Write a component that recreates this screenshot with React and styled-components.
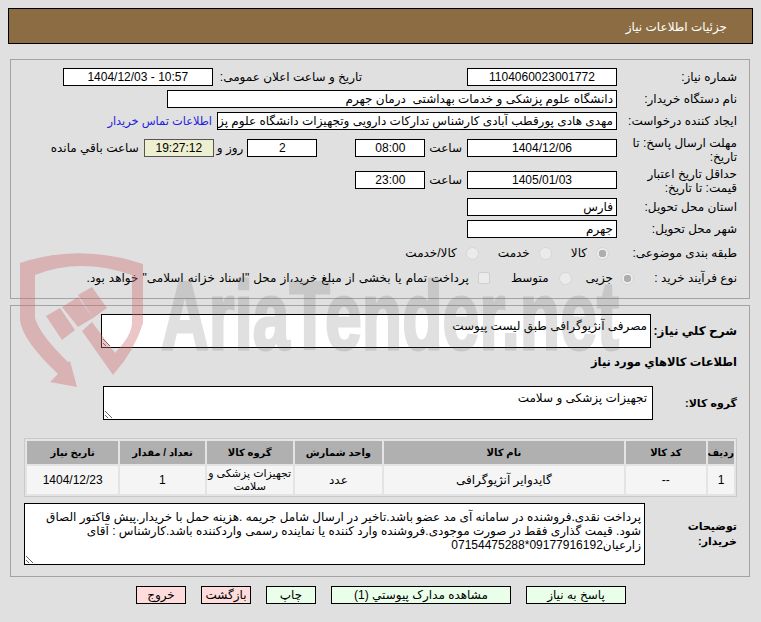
import React from 'react'
import styled, { createGlobalStyle } from 'styled-components'

const GlobalStyle = createGlobalStyle`
  html, body {
    margin: 0;
    padding: 0;
    background: #e0e0e0;
  }
  body {
    font-family: "Liberation Sans", "DejaVu Sans", sans-serif;
    font-size: 12px;
    color: #000;
  }
`

const Page = styled.div`
  position: relative;
  width: 761px;
  height: 622px;
  padding: 8px 8px 0;
  box-sizing: border-box;
  overflow: hidden;
  direction: rtl;
`

// sits over the page, the form shows through it
const Watermark = styled.svg`
  position: absolute;
  left: 0;
  top: 0;
  z-index: 5;
  pointer-events: none;
`

const MarkText = styled.text`
  font-family: "Liberation Sans", sans-serif;
  font-weight: 700;
  fill: #5a5a5a;
  stroke: #5a5a5a;
  stroke-width: 3px;
  opacity: 0.18;
  direction: ltr;
`

const Header = styled.div`
  position: relative;
  height: 36px;
  background: #8c6d43;
  border: 1px solid #000;
  box-sizing: border-box;
  color: #fff;
  display: flex;
  align-items: center;
  padding: 2px 25px 0 0;
  font-size: 12px;
`

const Panel = styled.div`
  position: relative;
  margin: ${p => p.$top}px 3px 0 2px;
  height: ${p => p.$height}px;
  border: 1px solid #a3a3a3;
  box-sizing: border-box;
  padding: 8px 12px 0 12px;
`

const Row = styled.div`
  display: flex;
  align-items: center;
  height: ${p => p.$h || 18}px;
  margin-top: ${p => p.$mt || 0}px;
`

const Label = styled.div`
  width: 112px;
  flex: none;
  margin-left: 8px;
  padding-top: ${p => p.$pt || 0}px;
  line-height: 14px;
`

const BoldLabel = styled.div`
  width: ${p => p.$w}px;
  flex: none;
  font-weight: 700;
  font-size: ${p => p.$size || 11}px;
  line-height: 15px;
`

const Field = styled.div`
  width: ${p => p.$w}px;
  height: 18px;
  flex: none;
  box-sizing: border-box;
  margin-right: ${p => p.$mr || 0}px;
  background: ${p => p.$bg || '#fff'};
  border: 1px solid ${p => (p.$bg ? '#555' : '#000')};
  line-height: 16px;
  padding: 0 3px;
  text-align: ${p => p.$align || 'right'};
  white-space: pre;
  overflow: hidden;
`

const Text = styled.span`
  margin-right: ${p => p.$mr || 0}px;
  white-space: nowrap;
  word-spacing: ${p => p.$ws || 0}px;
  color: inherit;
`

const ContactLink = styled.a`
  margin-right: 5px;
  white-space: nowrap;
  font-size: 11.4px;
  color: #2222dd;
`

const Radio = styled.input.attrs({ type: 'radio', disabled: true })`
  appearance: none;
  flex: none;
  width: 13px;
  height: 13px;
  margin: 1px ${p => p.$mr || 0}px 0 0;
  border-radius: 50%;
  border: 1px solid #d6d6d6;
  background: #ebebeb;
  box-sizing: border-box;
  &:checked {
    background: radial-gradient(circle, #adadad 0 3.5px, #ebebeb 4px);
  }
`

const Check = styled.input.attrs({ type: 'checkbox', disabled: true })`
  appearance: none;
  flex: none;
  width: 12px;
  height: 12px;
  margin: -1px ${p => p.$mr || 0}px 0 0;
  border: 1px solid #d0d0d0;
  border-radius: 2px;
  background: #ebebeb;
  box-sizing: border-box;
`

const Area = styled.div`
  width: ${p => p.$w}px;
  height: ${p => p.$h}px;
  flex: none;
  box-sizing: border-box;
  background: #fff;
  border: 1px solid #000;
  padding: ${p => p.$pt || 4}px ${p => p.$pr || 3}px 0 3px;
  line-height: 14px;
  overflow: auto;
  resize: both;
`

const Heading = styled.div`
  font-weight: 700;
  font-size: 11.5px;
  height: 18px;
  line-height: 18px;
  margin-top: 5px;
`

const GoodsTable = styled.table`
  width: 713px;
  margin-top: 18px;
  border-collapse: separate;
  border-spacing: 2px;
  border: 1px solid #c9c9c9;
  table-layout: fixed;
  background: #e4e4e4;
`

const Th = styled.th`
  width: ${p => p.$w}px;
  height: 23px;
  padding: 0;
  background: #b0b0b0;
  font-size: 10px;
  font-weight: 700;
  text-align: center;
`

const Td = styled.td`
  height: 28px;
  padding: 0;
  background: #f5f5f5;
  font-size: ${p => (p.$small ? 11 : 12)}px;
  text-align: center;
  line-height: 13px;
`

const NoteRow = styled.div`
  display: flex;
  align-items: center;
  margin-top: 6px;
  height: 61px;
`

const Buttons = styled.div`
  position: relative;
  display: flex;
  gap: 15px;
  margin-top: 9px;
  padding-right: 127px;
`

const Button = styled.button`
  width: ${p => p.$w}px;
  height: 18px;
  padding: 0;
  box-sizing: border-box;
  border: 1px solid #000;
  background: ${p => (p.$danger ? '#ffdcdc' : '#eaffea')};
  font: inherit;
  color: #000;
`

const heads = [
  ['ردیف', 26],
  ['کد کالا', 80],
  ['نام کالا', 239],
  ['واحد شمارش', 87],
  ['گروه کالا', 86],
  ['تعداد / مقدار', 84],
  ['تاریخ نیاز', 91],
]

const note = 'پرداخت نقدی.فروشنده در سامانه آی مد عضو باشد.تاخیر در ارسال شامل جریمه .هزینه حمل با خریدار.پیش فاکتور الصاق شود. قیمت گذاری فقط در صورت موجودی.فروشنده وارد کننده یا نماینده رسمی واردکننده باشد.کارشناس : آقای زارعیان09177916192*07154475288'

export default function App() {
  return (
    <Page>
      <GlobalStyle />
      <Watermark width="761" height="622" viewBox="0 0 761 622">
        <path
          d="M20 263 Q80 243 143 264 L143 323 Q135 350 113 375 L82 331 L92 322 L115 353 Q132 335 132 323 L132 275 Q80 257 35 275 L35 318 Q40 335 68 362 L70 361 L77 387 L50 382 L58 374 Q22 340 20 320 Z"
          fill="rgba(206, 106, 112, 0.39)"
        />
        <path
          d="M46 316 L60 308 L75 330 L62 340 Z M62 307 L78 297 L93 318 L78 327 Z M78 295 L92 287 L107 308 L93 318 Z"
          fill="rgba(206, 106, 112, 0.39)"
        />
        <MarkText x="161" y="349" fontSize="96" textLength="458" lengthAdjust="spacingAndGlyphs">AriaTender.net</MarkText>
      </Watermark>

      <Header>جزئیات اطلاعات نیاز</Header>

      <Panel $top={15} $height={240}>
        <Row>
          <Label>شماره نیاز:</Label>
          <Field $w={150} $align="center">1104060023001772</Field>
          <Text $mr={105}>تاریخ و ساعت اعلان عمومی:</Text>
          <Field $w={150} $mr={7} $align="center">10:57 - 1404/12/03</Field>
        </Row>
        <Row $mt={4}>
          <Label>نام دستگاه خریدار:</Label>
          <Field $w={450}>دانشگاه علوم پزشکی و خدمات بهداشتی  درمان جهرم</Field>
        </Row>
        <Row $mt={4}>
          <Label>ایجاد کننده درخواست:</Label>
          <Field $w={400}>مهدی هادی پورقطب آبادی کارشناس تدارکات دارویی وتجهیزات دانشگاه علوم پزشکی و خدمات بهداشتی</Field>
          <ContactLink>اطلاعات تماس خریدار</ContactLink>
        </Row>
        <Row $h={30} $mt={3}>
          <Label $pt={3}>مهلت ارسال پاسخ: تا تاریخ:</Label>
          <Field $w={150} $align="center">1404/12/06</Field>
          <Text $mr={5}>ساعت</Text>
          <Field $w={70} $mr={4} $align="center">08:00</Field>
          <Field $w={70} $mr={38} $align="center">2</Field>
          <Text $mr={4}>روز و</Text>
          <Field $w={70} $mr={3} $bg="#eeeed1" $align="center">19:27:12</Field>
          <Text $mr={5}>ساعت باقي مانده</Text>
        </Row>
        <Row $h={30} $mt={2}>
          <Label $pt={2}>حداقل تاریخ اعتبار قیمت: تا تاریخ:</Label>
          <Field $w={150} $align="center">1405/01/03</Field>
          <Text $mr={5}>ساعت</Text>
          <Field $w={70} $mr={4} $align="center">23:00</Field>
        </Row>
        <Row $mt={3}>
          <Label>استان محل تحویل:</Label>
          <Field $w={150}>فارس</Field>
        </Row>
        <Row $mt={4}>
          <Label>شهر محل تحویل:</Label>
          <Field $w={150}>جهرم</Field>
        </Row>
        <Row $mt={6}>
          <Label>طبقه بندی موضوعی:</Label>
          <Radio name="kind" defaultChecked $mr={8} />
          <Text $mr={9}>کالا</Text>
          <Radio name="kind" $mr={19} />
          <Text $mr={9}>خدمت</Text>
          <Radio name="kind" $mr={19} />
          <Text $mr={9}>کالا/خدمت</Text>
        </Row>
        <Row $mt={7}>
          <Label>نوع فرآیند خرید :</Label>
          <Radio name="proc" defaultChecked $mr={-17} />
          <Text $mr={8}>جزیی</Text>
          <Radio name="proc" $mr={14} />
          <Text $mr={10}>متوسط</Text>
          <Check $mr={21} />
          <Text $mr={9} $ws={0.7}>پرداخت تمام یا بخشی از مبلغ خرید،از محل "اسناد خزانه اسلامی" خواهد بود.</Text>
        </Row>
      </Panel>

      <Panel $top={6} $height={272}>
        <Row $h={34}>
          <BoldLabel $w={86} $size={12}>شرح کلي نیاز:</BoldLabel>
          <Area $w={550} $h={34}>مصرفی آنژیوگرافی طبق لیست پیوست</Area>
        </Row>
        <Heading>اطلاعات کالاهاي مورد نیاز</Heading>
        <Row $h={34} $mt={15}>
          <BoldLabel $w={84}>گروه کالا:</BoldLabel>
          <Area $w={550} $h={34} $pr={5}>تجهیزات پزشکی و سلامت</Area>
        </Row>
        <GoodsTable>
          <thead>
            <tr>
              {heads.map(([title, w]) => <Th key={title} $w={w}>{title}</Th>)}
            </tr>
          </thead>
          <tbody>
            <tr>
              <Td>1</Td>
              <Td>--</Td>
              <Td>گایدوایر آنژیوگرافی</Td>
              <Td>عدد</Td>
              <Td $small>تجهیزات پزشکی و سلامت</Td>
              <Td>1</Td>
              <Td>1404/12/23</Td>
            </tr>
          </tbody>
        </GoodsTable>
        <NoteRow>
          <BoldLabel $w={92}>توضیحات<br />خریدار:</BoldLabel>
          <Area $w={621} $h={62} $pt={6}>{note}</Area>
        </NoteRow>
      </Panel>

      <Buttons>
        <Button $w={100}>پاسخ به نیاز</Button>
        <Button $w={180}>مشاهده مدارک پیوستي (1)</Button>
        <Button $w={50}>چاپ</Button>
        <Button $w={50} $danger>بازگشت</Button>
        <Button $w={50} $danger>خروج</Button>
      </Buttons>
    </Page>
  )
}
